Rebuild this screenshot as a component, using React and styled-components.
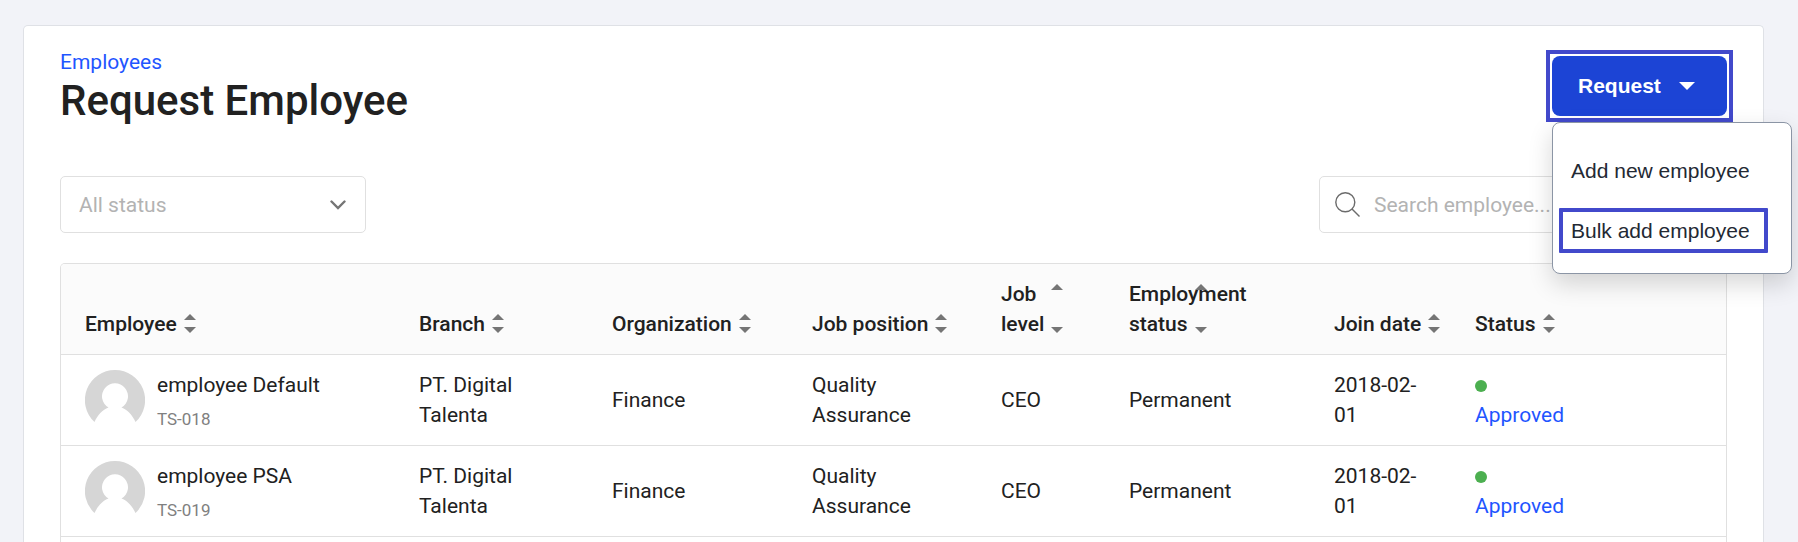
import React from "react";
import styled, { createGlobalStyle } from "styled-components";

const columns = [
  { label: "Employee", width: 334 },
  { label: "Branch", width: 193 },
  { label: "Organization", width: 200 },
  { label: "Job position", width: 189 },
  { label: "Job level", width: 128 },
  { label: "Employment status", width: 205 },
  { label: "Join date", width: 141, nowrap: true },
  { label: "Status" },
];

const employees = [
  {
    id: "TS-018",
    name: "employee Default",
    branch: "PT. Digital Talenta",
    organization: "Finance",
    position: "Quality Assurance",
    level: "CEO",
    employment: "Permanent",
    joinDate: "2018-02-01",
    status: "Approved",
  },
  {
    id: "TS-019",
    name: "employee PSA",
    branch: "PT. Digital Talenta",
    organization: "Finance",
    position: "Quality Assurance",
    level: "CEO",
    employment: "Permanent",
    joinDate: "2018-02-01",
    status: "Approved",
  },
];

function App() {
  return (
    <Page>
      <GlobalStyle />
      <Card>
        <Header>
          <div>
            <Breadcrumb href="#employees">Employees</Breadcrumb>
            <Title>Request Employee</Title>
          </div>
          <Dropdown>
            <RequestButton type="button" aria-haspopup="menu" aria-expanded="true">
              Request
              <Caret viewBox="0 0 16 8" aria-hidden="true">
                <path d="M0 0h16L8 8z" fill="currentColor" />
              </Caret>
            </RequestButton>
            <Menu role="menu">
              <MenuItem type="button" role="menuitem">
                Add new employee
              </MenuItem>
              <MenuItem type="button" role="menuitem" $marked>
                Bulk add employee
              </MenuItem>
            </Menu>
          </Dropdown>
        </Header>

        <Filters>
          <SelectBox>
            <Select aria-label="Status filter" defaultValue="all">
              <option value="all">All status</option>
            </Select>
            <Chevron viewBox="0 0 16 10" aria-hidden="true">
              <path
                d="M1.500 1.500 8 8l6.500-6.500"
                fill="none"
                stroke="currentColor"
                strokeWidth="2.400"
                strokeLinecap="round"
              />
            </Chevron>
          </SelectBox>
          <SearchBox>
            <SearchIcon viewBox="0 0 25 25" aria-hidden="true">
              <g fill="none" stroke="currentColor" strokeWidth="1.400">
                <circle cx="10.300" cy="10.300" r="9.500" />
                <path d="M17 17l7.500 7.500" />
              </g>
            </SearchIcon>
            <SearchInput
              type="text"
              aria-label="Search employee"
              placeholder="Search employee..."
            />
          </SearchBox>
        </Filters>

        <TableBox>
          <Table>
            <colgroup>
              {columns.map((column) => (
                <col key={column.label} width={column.width} />
              ))}
            </colgroup>
            <thead>
              <tr>
                {columns.map((column) => (
                  <HeadCell
                    key={column.label}
                    scope="col"
                    $nowrap={column.nowrap}
                  >
                    <SortLabel>{column.label}</SortLabel>
                  </HeadCell>
                ))}
              </tr>
            </thead>
            <tbody>
              {employees.map((employee) => (
                <tr key={employee.id}>
                  <Cell>
                    <Person>
                      <Avatar />
                      <div>
                        <div>{employee.name}</div>
                        <EmployeeId>{employee.id}</EmployeeId>
                      </div>
                    </Person>
                  </Cell>
                  <Cell>{employee.branch}</Cell>
                  <Cell>{employee.organization}</Cell>
                  <Cell>{employee.position}</Cell>
                  <Cell>{employee.level}</Cell>
                  <Cell>{employee.employment}</Cell>
                  <Cell>{employee.joinDate}</Cell>
                  <Cell>
                    <StatusDot />
                    <StatusLink href="#status">{employee.status}</StatusLink>
                  </Cell>
                </tr>
              ))}
            </tbody>
          </Table>
        </TableBox>
      </Card>
    </Page>
  );
}

function Avatar() {
  return (
    <AvatarIcon viewBox="0 0 60 60" aria-hidden="true">
      <path
        d="M30 0a30 30 0 0 1 20.500 52C47.500 45.500 42.500 39.500 36.500 37.500a13 13 0 1 0-13 0C17.500 39.500 12.500 45.500 9.500 52A30 30 0 0 1 30 0z"
        fill="#d6d6d6"
      />
    </AvatarIcon>
  );
}

const GlobalStyle = createGlobalStyle`
  *, *::before, *::after {
    box-sizing: border-box;
  }

  body {
    margin: 0;
    background-color: #f2f3f8;
    color: #212121;
    font-family: Roboto, "Liberation Sans", sans-serif;
    font-size: 21px;
    line-height: 30px;
  }

  button, input, select {
    font: inherit;
  }
`;

const Page = styled.div`
  display: flex;
  height: 100vh;
  padding: 25px 34px 0 23px;
  overflow: hidden;
`;

const Card = styled.main`
  display: flex;
  flex: 1;
  flex-direction: column;
  min-width: 0;
  padding: 21px 36px 0;
  background-color: #fff;
  border: 1px solid #dfe1e6;
  border-bottom: 0;
  border-radius: 5px 5px 0 0;
`;

const Header = styled.header`
  display: flex;
  align-items: center;
  justify-content: space-between;
`;

const Breadcrumb = styled.a`
  display: block;
  color: #1f55ff;
  text-decoration: none;
`;

const Title = styled.h1`
  margin: 0;
  font-size: 42px;
  font-weight: 500;
  line-height: 48px;
`;

const Dropdown = styled.div`
  position: relative;
  outline: 4px solid #4249cb;
  outline-offset: 2px;
`;

const RequestButton = styled.button`
  display: flex;
  align-items: center;
  justify-content: space-between;
  width: 175px;
  height: 60px;
  padding: 0 32px 0 26px;
  background-color: #1c44d5;
  border: 0;
  border-radius: 8px;
  color: #fff;
  font-family: "Liberation Sans", Arial, sans-serif;
  font-weight: 700;
`;

const Caret = styled.svg`
  width: 16px;
  height: 8px;
`;

const Menu = styled.div`
  position: absolute;
  top: 66px;
  left: 0;
  z-index: 1;
  width: 240px;
  padding: 18px 0 12px;
  background-color: #fff;
  border: 1px solid #8b95a5;
  border-radius: 8px;
  box-shadow: 0 10px 24px rgba(0, 0, 0, 0.16);
`;

const MenuItem = styled.button`
  position: relative;
  display: block;
  width: 100%;
  height: 60px;
  padding: 0 18px;
  background: none;
  border: 0;
  color: #232933;
  font-family: "Liberation Sans", Arial, sans-serif;
  text-align: left;

  &::after {
    content: "";
    display: ${(props) => (props.$marked ? "block" : "none")};
    position: absolute;
    inset: 7px 23px 8px 6px;
    border: 4px solid #4249cb;
    border-radius: 1px;
  }
`;

const Filters = styled.div`
  display: flex;
  justify-content: space-between;
  margin: 51px 0 30px;
`;

const SelectBox = styled.div`
  display: grid;
  align-items: center;
  width: 306px;

  > * {
    grid-area: 1 / 1;
  }
`;

const Select = styled.select`
  width: 100%;
  height: 57px;
  padding: 0 18px;
  appearance: none;
  background-color: #fff;
  border: 1px solid #e0e0e0;
  border-radius: 5px;
  color: #b3b3b3;
`;

const Chevron = styled.svg`
  justify-self: end;
  width: 16px;
  height: 10px;
  margin-right: 20px;
  color: #757575;
  pointer-events: none;
`;

const SearchBox = styled.div`
  display: flex;
  align-items: center;
  gap: 14px;
  width: 408px;
  height: 57px;
  padding: 0 15px;
  border: 1px solid #e0e0e0;
  border-radius: 5px;
`;

const SearchIcon = styled.svg`
  flex: none;
  width: 25px;
  height: 25px;
  color: #6b6b6b;
`;

const SearchInput = styled.input`
  flex: 1;
  min-width: 0;
  padding: 0;
  background: none;
  border: 0;

  &::placeholder {
    color: #b3b3b3;
    opacity: 1;
  }
`;

const TableBox = styled.div`
  flex: 1;
  overflow: hidden;
  border: 1px solid #e0e0e0;
  border-bottom: 0;
  border-radius: 5px 5px 0 0;
`;

const Table = styled.table`
  width: 100%;
  border-spacing: 0;
  table-layout: fixed;
`;

const HeadCell = styled.th`
  padding: 15px 24px;
  background-color: #fbfbfb;
  border-bottom: 1px solid #e0e0e0;
  font-weight: 500;
  text-align: left;
  vertical-align: bottom;
  white-space: ${(props) => (props.$nowrap ? "nowrap" : "normal")};
`;

// Inline on purpose: the arrows follow the last word when a label wraps.
const SortLabel = styled.span`
  position: relative;
  padding-right: 19px;

  &::before,
  &::after {
    content: "";
    position: absolute;
    right: 0;
    border: 6px solid transparent;
  }

  &::before {
    top: 2px;
    border-top: 0;
    border-bottom-color: #757575;
  }

  &::after {
    bottom: 3px;
    border-bottom: 0;
    border-top-color: #757575;
  }
`;

const Cell = styled.td`
  padding: 15px 12px 15px 24px;
  border-bottom: 1px solid #e0e0e0;
`;

const Person = styled.div`
  display: flex;
  gap: 12px;
`;

const AvatarIcon = styled.svg`
  flex: none;
  width: 60px;
  height: 60px;
`;

const EmployeeId = styled.div`
  margin-top: 8px;
  color: #808080;
  font-size: 17px;
  line-height: 22px;
`;

const StatusDot = styled.span`
  display: block;
  width: 12px;
  height: 12px;
  margin: 10px 0 8px;
  background-color: #4caf50;
  border-radius: 50%;
`;

const StatusLink = styled.a`
  color: #1f55ff;
  text-decoration: none;
`;

export default App;
